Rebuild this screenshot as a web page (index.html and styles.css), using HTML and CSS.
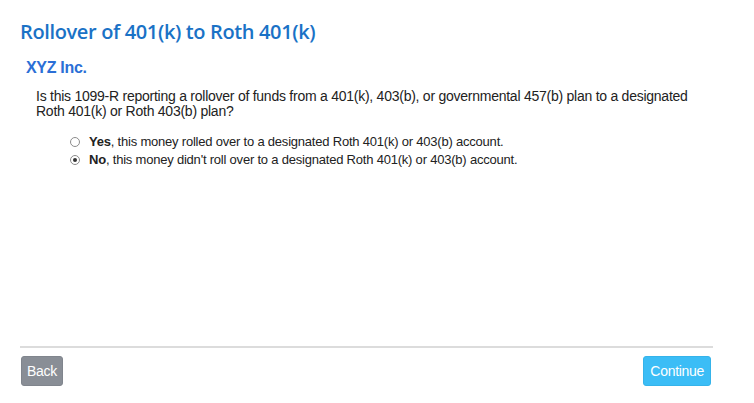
FILE: index.html
```html
<!DOCTYPE html>
<html lang="en">
<head>
<meta charset="utf-8">
<title>Rollover of 401(k) to Roth 401(k)</title>
<link rel="stylesheet" href="styles.css">
</head>
<body>
<div class="page">
  <main class="content">
    <h1 class="title">Rollover of 401(k) to Roth 401(k)</h1>
    <h2 class="payer">XYZ Inc.</h2>
    <p class="question">Is this 1099-R reporting a rollover of funds from a 401(k), 403(b), or governmental 457(b) plan to a designated Roth 401(k) or Roth 403(b) plan?</p>
    <div class="options">
      <label class="option">
        <span class="radio"></span>
        <span class="label-text"><b>Yes</b>, this money rolled over to a designated Roth 401(k) or 403(b) account.</span>
      </label>
      <label class="option">
        <span class="radio checked"></span>
        <span class="label-text"><b>No</b>, this money didn't roll over to a designated Roth 401(k) or 403(b) account.</span>
      </label>
    </div>
  </main>
  <footer class="footer">
    <button class="btn btn-back" type="button">Back</button>
    <button class="btn btn-continue" type="button">Continue</button>
  </footer>
</div>
</body>
</html>
```
FILE: styles.css
```css
html, body {
  margin: 0;
  padding: 0;
  background: #ffffff;
}

.page {
  height: 100vh;
  box-sizing: border-box;
  display: flex;
  flex-direction: column;
  width: 693px;
  margin-left: 20px;
  padding-top: 18px;
  font-family: "Liberation Sans", Arial, sans-serif;
  color: #222222;
}

.content {
  flex: 1;
}

.title {
  margin: 0;
  font-family: "Open Sans", "Liberation Sans", sans-serif;
  font-weight: 600;
  font-size: 20px;
  letter-spacing: -0.36px;
  line-height: 28px;
  color: #1a72c6;
}

.payer {
  margin: 13px 0 0 6px;
  font-family: "Liberation Sans", Arial, sans-serif;
  font-weight: 700;
  font-size: 16px;
  letter-spacing: -0.3px;
  line-height: 18px;
  color: #2b6fd6;
}

.question {
  margin: 12px 0 0 16px;
  font-size: 14px;
  letter-spacing: -0.25px;
  line-height: 15px;
}

.options {
  margin-top: 14px;
  padding-left: 50px;
  display: flex;
  flex-direction: column;
}

.option {
  display: flex;
  align-items: center;
  gap: 9px;
  font-size: 13px;
  letter-spacing: -0.21px;
  line-height: 18px;
}

.radio {
  width: 10px;
  height: 10px;
  box-sizing: border-box;
  border: 1px solid #8c8c8c;
  border-radius: 50%;
  background: #ffffff;
  display: flex;
  align-items: center;
  justify-content: center;
}

.radio.checked::after {
  content: "";
  width: 4px;
  height: 4px;
  border-radius: 50%;
  background: #333333;
}

.label-text b {
  font-weight: 700;
}

.footer {
  border-top: 2px solid #dcdcdc;
  padding: 8px 0 17px 1px;
  display: flex;
  justify-content: space-between;
  align-items: center;
}

.btn {
  height: 30px;
  border-radius: 3px;
  font-family: "Liberation Sans", Arial, sans-serif;
  font-size: 14px;
  letter-spacing: -0.3px;
  color: #ffffff;
  cursor: pointer;
}

.btn-back {
  padding: 0 5px;
  background: #898e96;
  border: 1px solid #80858d;
}

.btn-continue {
  margin-right: 2px;
  padding: 0 6px;
  background: #3bbdf6;
  border: 1px solid #35b3ea;
}
```
